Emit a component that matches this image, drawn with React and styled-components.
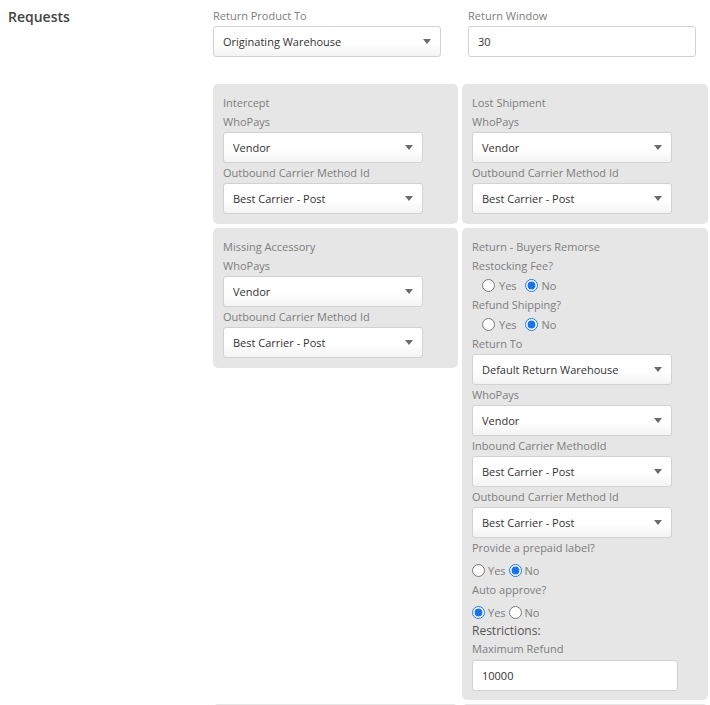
import React from "react";
import styled, { createGlobalStyle } from "styled-components";

const GlobalStyle = createGlobalStyle`
  html, body {
    margin: 0;
    padding: 0;
    background: #fff;
  }
  body {
    font-family: "Open Sans", "Liberation Sans", sans-serif;
    color: #333;
  }
  * { box-sizing: border-box; }
`;

const Page = styled.div`
  display: flex;
  align-items: flex-start;
  padding-left: 8px;
  width: 710px;
`;

const Sidebar = styled.aside`
  width: 205px;
  flex: none;
  padding-top: 7px;
`;

const Heading = styled.h2`
  margin: 0;
  font-size: 14px;
  line-height: 20px;
  font-weight: 600;
  color: #444;
`;

const Main = styled.main`
  width: 495px;
  flex: none;
  padding-top: 6px;
`;

const TopRow = styled.div`
  display: grid;
  grid-template-columns: 255px 240px;
`;

const Field = styled.div`
  display: flex;
  flex-direction: column;
`;

const Label = styled.div`
  font-size: 11px;
  line-height: 19px;
  height: 19px;
  color: #7d7d7d;
  white-space: nowrap;
`;

const Heading2 = styled.div`
  font-size: 12px;
  line-height: 18px;
  height: 18px;
  color: #555;
`;

const SmallLabel = styled(Label)`
  line-height: 17px;
  height: 17px;
`;

const SelectBox = styled.div`
  display: flex;
  align-items: center;
  justify-content: space-between;
  width: ${(p) => p.$width}px;
  height: 31px;
  margin-top: 1px;
  padding: 0 9px 0 9px;
  background: linear-gradient(#ffffff 55%, #f3f3f3);
  border: 1px solid #d2d2d2;
  border-radius: 3px;
  font-size: 11px;
  color: #333;
  cursor: default;
`;

const Caret = styled.span`
  width: 0;
  height: 0;
  border-left: 4.5px solid transparent;
  border-right: 4.5px solid transparent;
  border-top: 5px solid #6b6b6b;
`;

const TextInput = styled.input`
  width: ${(p) => p.$width}px;
  height: 31px;
  margin-top: ${(p) => p.$gap}px;
  padding: 0 9px;
  background: #fff;
  border: 1px solid #d2d2d2;
  border-radius: 3px;
  font-family: inherit;
  font-size: 11px;
  color: #333;
  outline: none;
`;

const PanelGrid = styled.div`
  display: grid;
  grid-template-columns: 245px 246px;
  column-gap: 4px;
  row-gap: 4px;
  align-items: start;
  margin-top: 27px;
`;

const Panel = styled.section`
  background: #e6e6e6;
  border-radius: 5px;
  padding: 9px 10px ${(p) => p.$bottom ?? 10}px 10px;
  min-height: ${(p) => p.$minHeight || 0}px;
`;

const PanelBody = styled.div`
  display: flex;
  flex-direction: column;
`;

const RadioRow = styled.div`
  display: flex;
  align-items: center;
  gap: ${(p) => p.$gap}px;
  height: 20px;
  margin-top: ${(p) => p.$top}px;
  padding-left: ${(p) => p.$indent}px;
`;

const Option = styled.label`
  display: flex;
  align-items: center;
  gap: ${(p) => p.$gap}px;
  font-size: 11px;
  color: #7d7d7d;
`;

const Radio = styled.input.attrs({ type: "radio" })`
  width: 13px;
  height: 13px;
  margin: 0;
  accent-color: #1a73e8;
`;

function Select({ value, width = 200 }) {
  return (
    <SelectBox $width={width} role="combobox">
      <span>{value}</span>
      <Caret />
    </SelectBox>
  );
}

function YesNo({ name, value, indent = false }) {
  const gap = indent ? 8 : 3;
  const inner = indent ? 4 : 3;
  return (
    <RadioRow $gap={gap} $indent={indent ? 10 : 0} $top={indent ? 0 : 3}>
      <Option $gap={inner}>
        <Radio name={name} defaultChecked={value === "yes"} />
        Yes
      </Option>
      <Option $gap={inner}>
        <Radio name={name} defaultChecked={value === "no"} />
        No
      </Option>
    </RadioRow>
  );
}

function CarrierPanel({ title }) {
  return (
    <Panel>
      <PanelBody>
        <Label>{title}</Label>
        <Label>WhoPays</Label>
        <Select value="Vendor" />
        <Label>Outbound Carrier Method Id</Label>
        <Select value="Best Carrier - Post" />
      </PanelBody>
    </Panel>
  );
}

function RemorsePanel() {
  return (
    <Panel $bottom={9}>
      <PanelBody>
        <Label>Return - Buyers Remorse</Label>
        <Label>Restocking Fee?</Label>
        <YesNo name="restock" value="no" indent />
        <Label>Refund Shipping?</Label>
        <YesNo name="refundShip" value="no" indent />
        <Label>Return To</Label>
        <Select value="Default Return Warehouse" />
        <Label>WhoPays</Label>
        <Select value="Vendor" />
        <Label>Inbound Carrier MethodId</Label>
        <Select value="Best Carrier - Post" />
        <Label>Outbound Carrier Method Id</Label>
        <Select value="Best Carrier - Post" />
        <Label>Provide a prepaid label?</Label>
        <YesNo name="prepaid" value="no" />
        <Label>Auto approve?</Label>
        <YesNo name="autoApprove" value="yes" />
        <Heading2>Restrictions:</Heading2>
        <SmallLabel>Maximum Refund</SmallLabel>
        <TextInput $width={206} $gap={3} defaultValue="10000" />
      </PanelBody>
    </Panel>
  );
}

export default function App() {
  return (
    <>
      <GlobalStyle />
      <Page>
        <Sidebar>
          <Heading>Requests</Heading>
        </Sidebar>
        <Main>
          <TopRow>
            <Field>
              <Label>Return Product To</Label>
              <Select value="Originating Warehouse" width={228} />
            </Field>
            <Field>
              <Label>Return Window</Label>
              <TextInput $width={228} $gap={1} defaultValue="30" />
            </Field>
          </TopRow>
          <PanelGrid>
            <CarrierPanel title="Intercept" />
            <CarrierPanel title="Lost Shipment" />
            <CarrierPanel title="Missing Accessory" />
            <RemorsePanel />
            <Panel $minHeight={140} />
            <Panel $minHeight={140} />
          </PanelGrid>
        </Main>
      </Page>
    </>
  );
}
